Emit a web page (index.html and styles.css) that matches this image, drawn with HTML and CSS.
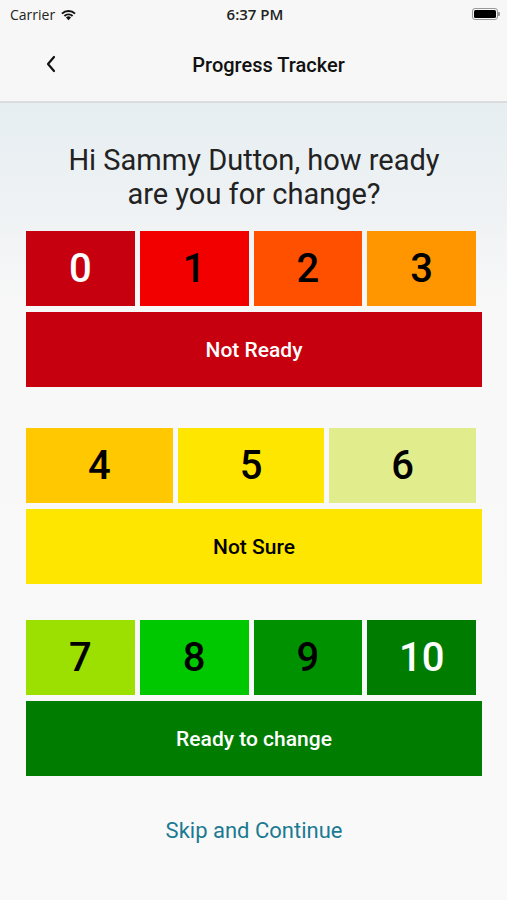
FILE: index.html
```html
<!DOCTYPE html>
<html lang="en">
<head>
    <meta charset="UTF-8">
    <meta name="viewport" content="width=device-width, initial-scale=1.0">
    <title>Progress Tracker</title>
    <link rel="stylesheet" href="styles.css">
</head>
<body>
    <div class="status-bar">
        <div class="carrier">
            Carrier
            <svg class="wifi" width="17" height="13" viewBox="0 0 16 12">
                <path d="M8 11.5 L5.6 8.9 A3.4 3.4 0 0 1 10.4 8.9 Z" fill="#111"/>
                <path d="M3.5 6.8 A6.4 6.4 0 0 1 12.5 6.8 L11.2 8.1 A4.6 4.6 0 0 0 4.8 8.1 Z" fill="#111"/>
                <path d="M1.2 4.5 A9.6 9.6 0 0 1 14.8 4.5 L13.5 5.8 A7.8 7.8 0 0 0 2.5 5.8 Z" fill="#111"/>
            </svg>
        </div>
        <div class="time">6:37 PM</div>
        <div class="battery">
            <div class="battery-body"><div class="battery-fill"></div></div>
            <div class="battery-tip"></div>
        </div>
    </div>

    <div class="nav-bar">
        <svg class="back" width="12" height="20" viewBox="0 0 12 20">
            <path d="M9 3 L3 10 L9 17" fill="none" stroke="#111" stroke-width="2.2" stroke-linecap="round" stroke-linejoin="round"/>
        </svg>
        <h1>Progress Tracker</h1>
    </div>

    <div class="content">
        <h2 class="question">Hi Sammy Dutton, how ready<br>are you for change?</h2>

        <div class="group not-ready">
            <div class="tiles">
                <div class="tile light" style="background: #c7000f;">0</div>
                <div class="tile" style="background: #f20000;">1</div>
                <div class="tile" style="background: #ff5000;">2</div>
                <div class="tile" style="background: #ff9600;">3</div>
            </div>
            <div class="label light" style="background: #c7000f;">Not Ready</div>
        </div>

        <div class="group not-sure">
            <div class="tiles">
                <div class="tile" style="background: #ffc800;">4</div>
                <div class="tile" style="background: #ffe600;">5</div>
                <div class="tile" style="background: #e1ec8c;">6</div>
            </div>
            <div class="label" style="background: #ffe600;">Not Sure</div>
        </div>

        <div class="group ready">
            <div class="tiles">
                <div class="tile" style="background: #9be000;">7</div>
                <div class="tile" style="background: #00c800;">8</div>
                <div class="tile" style="background: #009100;">9</div>
                <div class="tile light" style="background: #007d00;">10</div>
            </div>
            <div class="label light" style="background: #007d00;">Ready to change</div>
        </div>

        <div class="skip">Skip and Continue</div>
    </div>
</body>
</html>
```

FILE: styles.css
```css
body {
    font-family: Roboto, 'Liberation Sans', sans-serif;
    background-color: #f9f9f9;
    color: #111;
    margin: 0;
    width: 507px;
    height: 900px;
    overflow: hidden;
}
.status-bar {
    height: 28px;
    background-color: #f7f7f7;
    display: flex;
    align-items: center;
    justify-content: space-between;
    padding: 0 7px 0 10px;
    font-family: 'Open Sans', 'Liberation Sans', sans-serif;
    font-size: 14px;
    color: #222;
}
.carrier {
    display: flex;
    align-items: center;
    gap: 5px;
    width: 120px;
}
.time {
    font-weight: 600;
    font-size: 15px;
}
.battery {
    width: 120px;
    display: flex;
    justify-content: flex-end;
    align-items: center;
}
.battery-body {
    width: 26px;
    height: 12px;
    border: 1px solid #999;
    border-radius: 3px;
    padding: 1px;
    box-sizing: border-box;
}
.battery-fill {
    width: 100%;
    height: 100%;
    background-color: #000;
    border-radius: 1.5px;
}
.battery-tip {
    width: 2px;
    height: 4px;
    background-color: #999;
    border-radius: 0 1px 1px 0;
}
.nav-bar {
    height: 73px;
    background-color: #f7f7f7;
    border-bottom: 2px solid #dcdcdc;
    display: flex;
    align-items: center;
    justify-content: center;
    padding-left: 30px;
    position: relative;
}
.back {
    position: absolute;
    left: 45px;
    top: 26px;
}
h1 {
    margin: 0;
    font-size: 20px;
    font-weight: 500;
    color: #111;
}
.content {
    background: linear-gradient(to bottom, #e6eef1 0px, #eff2f4 110px, #f8f8f8 200px, #f9f9f9 100%);
    padding: 40px 25px 0 26px;
    height: 797px;
}
.question {
    margin: 0 0 20px;
    text-align: center;
    font-size: 29px;
    line-height: 34px;
    font-weight: 400;
    color: #222;
}
.group {
    display: flex;
    flex-direction: column;
    gap: 6px;
}
.not-sure {
    margin-top: 41px;
}
.ready {
    margin-top: 36px;
}
.tiles {
    display: flex;
    gap: 5px;
    width: 450px;
}
.tile {
    flex: 1;
    height: 75px;
    display: flex;
    align-items: center;
    justify-content: center;
    font-size: 40px;
    font-weight: 500;
    color: #000;
}
.label {
    height: 75px;
    display: flex;
    align-items: center;
    justify-content: center;
    font-size: 21px;
    font-weight: 500;
    color: #000;
}
.light {
    color: #fff;
}
.skip {
    margin-top: 42px;
    text-align: center;
    font-size: 22px;
    color: #1b7a92;
}
```
